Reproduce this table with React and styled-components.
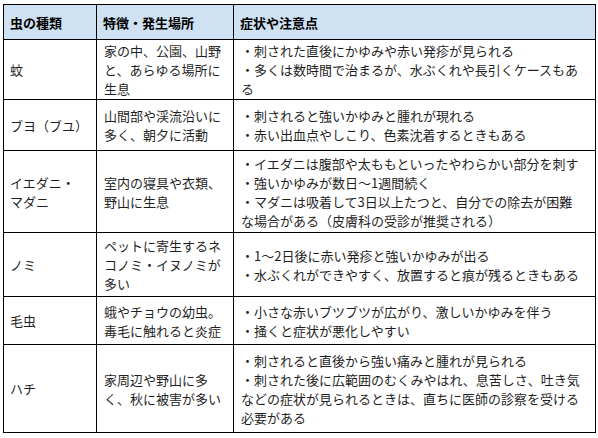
import React from "react";
import styled, { createGlobalStyle } from "styled-components";

const GlobalStyle = createGlobalStyle`
  body {
    margin: 0;
    background: #fff;
    font-family: "Noto Sans CJK JP", "Noto Sans", sans-serif;
  }
`;

const Wrapper = styled.div`
  padding: 4px 3px;
`;

const Table = styled.table`
  width: 592px;
  border-collapse: collapse;
  table-layout: fixed;
  font-size: 13px;
  line-height: 19px;
  color: #1f1f1f;
`;

const HeadCell = styled.th`
  height: 34px;
  padding: 0 6px;
  background-color: #cfe2f3;
  border: 1px solid #000;
  text-align: left;
  font-weight: 700;
  color: #000;
  vertical-align: middle;
`;

const Cell = styled.td`
  height: ${(props) => props.h}px;
  padding: 0 ${(props) => (props.first ? "6px" : "7px")};
  border: 1px solid #000;
  vertical-align: middle;
  white-space: nowrap;
`;

const Line = styled.div``;

const rows = [
  {
    h: 59,
    name: ["蚊"],
    place: ["家の中、公園、山野", "と、あらゆる場所に", "生息"],
    notes: [
      "・刺された直後にかゆみや赤い発疹が見られる",
      "・多くは数時間で治まるが、水ぶくれや長引くケースもあ",
      "る",
    ],
  },
  {
    h: 50,
    name: ["ブヨ（ブユ）"],
    place: ["山間部や渓流沿いに", "多く、朝夕に活動"],
    notes: ["・刺されると強いかゆみと腫れが現れる", "・赤い出血点やしこり、色素沈着するときもある"],
  },
  {
    h: 81,
    name: ["イエダニ・", "マダニ"],
    place: ["室内の寝具や衣類、", "野山に生息"],
    notes: [
      "・イエダニは腹部や太ももといったやわらかい部分を刺す",
      "・強いかゆみが数日〜1週間続く",
      "・マダニは吸着して3日以上たつと、自分での除去が困難",
      "な場合がある（皮膚科の受診が推奨される）",
    ],
  },
  {
    h: 63,
    name: ["ノミ"],
    place: ["ペットに寄生するネ", "コノミ・イヌノミが", "多い"],
    notes: ["・1〜2日後に赤い発疹と強いかゆみが出る", "・水ぶくれができやすく、放置すると痕が残るときもある"],
  },
  {
    h: 47,
    name: ["毛虫"],
    place: ["蛾やチョウの幼虫。", "毒毛に触れると炎症"],
    notes: ["・小さな赤いブツブツが広がり、激しいかゆみを伴う", "・掻くと症状が悪化しやすい"],
  },
  {
    h: 87,
    name: ["ハチ"],
    place: ["家周辺や野山に多", "く、秋に被害が多い"],
    notes: [
      "・刺されると直後から強い痛みと腫れが見られる",
      "・刺された後に広範囲のむくみやはれ、息苦しさ、吐き気",
      "などの症状が見られるときは、直ちに医師の診察を受ける",
      "必要がある",
    ],
  },
];

const Lines = ({ items }) => items.map((text, i) => <Line key={i}>{text}</Line>);

const App = () => {
  return (
    <Wrapper>
      <GlobalStyle />
      <Table>
        <colgroup>
          <col style={{ width: "93px" }} />
          <col style={{ width: "137px" }} />
          <col style={{ width: "362px" }} />
        </colgroup>
        <thead>
          <tr>
            <HeadCell>虫の種類</HeadCell>
            <HeadCell>特徴・発生場所</HeadCell>
            <HeadCell>症状や注意点</HeadCell>
          </tr>
        </thead>
        <tbody>
          {rows.map((row) => (
            <tr key={row.name.join("")}>
              <Cell h={row.h} first>
                <Lines items={row.name} />
              </Cell>
              <Cell h={row.h}>
                <Lines items={row.place} />
              </Cell>
              <Cell h={row.h}>
                <Lines items={row.notes} />
              </Cell>
            </tr>
          ))}
        </tbody>
      </Table>
    </Wrapper>
  );
};

export default App;
